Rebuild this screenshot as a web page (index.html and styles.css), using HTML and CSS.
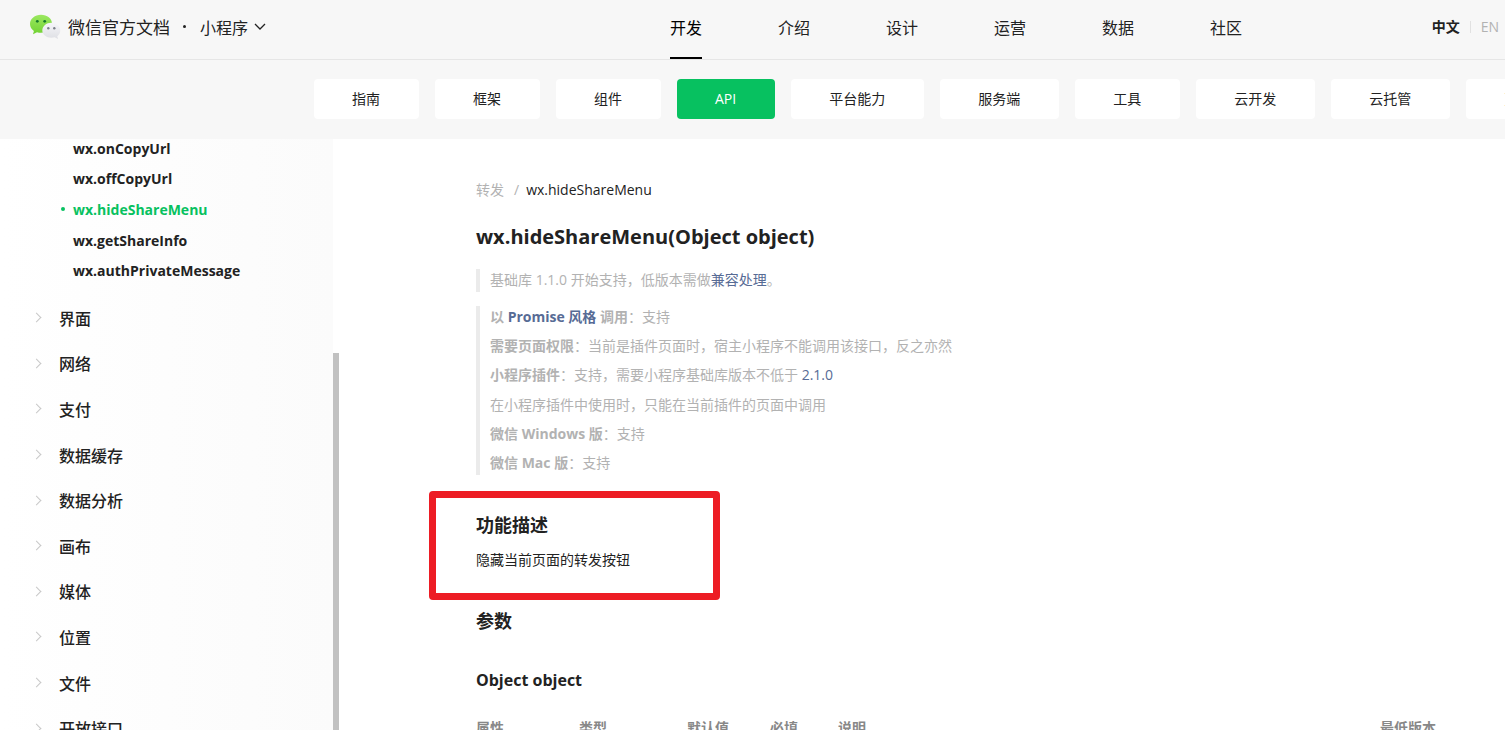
FILE: index.html
```html
<!DOCTYPE html>
<html lang="zh-CN">

<head>
    <meta charset="UTF-8">
    <meta name="viewport" content="width=device-width, initial-scale=1.0">
    <title>wx.hideShareMenu(Object object) | 微信开放文档</title>
    <link rel="stylesheet" href="styles.css">
</head>

<body>
    <header class="header">
        <div class="brand">
            <a href="#" class="brand-link">
                <svg class="logo" viewBox="0 0 32 26" width="32" height="26" aria-hidden="true">
                    <defs>
                        <linearGradient id="green" x1="0" y1="0" x2="0" y2="1">
                            <stop offset="0" stop-color="#9be860" />
                            <stop offset="1" stop-color="#71d233" />
                        </linearGradient>
                        <linearGradient id="grey" x1="0" y1="0" x2="0" y2="1">
                            <stop offset="0" stop-color="#f6f6f9" />
                            <stop offset="1" stop-color="#dedfe4" />
                        </linearGradient>
                    </defs>
                    <path fill="url(#green)" d="M12 0.8C5.900.8 1 4.900 1 10c0 2.800 1.500 5.300 3.900 7L4 20.300l4-2.100c1.300.4 2.600.6 4 .6 6.100 0 11-4.100 11-9.200S18.100.8 12 .8z" />
                    <circle cx="8.300" cy="7.300" r="1.400" fill="#187a2c" />
                    <circle cx="15.700" cy="7.300" r="1.400" fill="#187a2c" />
                    <path fill="url(#grey)" d="M22.300 8.800c5 0 9 3.400 9 7.700 0 2.300-1.200 4.300-3 5.700l.7 2.700-3.300-1.700c-1.100.3-2.200.5-3.400.5-5 0-9-3.200-9-7.200 0-4.300 4-7.700 9-7.700z" />
                    <circle cx="19.300" cy="14.300" r="1.200" fill="#7d8089" />
                    <circle cx="25.300" cy="14.300" r="1.200" fill="#7d8089" />
                </svg>
                <span>微信官方文档</span>
            </a>
            <span class="dot"></span>
            <button type="button" class="product">
                小程序
                <svg viewBox="0 0 12 8" width="12" height="8" aria-hidden="true">
                    <path d="M1 1l5 5 5-5" fill="none" stroke="#222" stroke-width="1.300" />
                </svg>
            </button>
        </div>
        <nav class="nav">
            <a href="#" class="active">开发</a>
            <a href="#">介绍</a>
            <a href="#">设计</a>
            <a href="#">运营</a>
            <a href="#">数据</a>
            <a href="#">社区</a>
        </nav>
        <div class="lang">
            <a href="#" class="current">中文</a>
            <a href="#">EN</a>
        </div>
    </header>

    <nav class="tabs">
        <a href="#">指南</a>
        <a href="#">框架</a>
        <a href="#">组件</a>
        <a href="#" class="active">API</a>
        <a href="#">平台能力</a>
        <a href="#">服务端</a>
        <a href="#">工具</a>
        <a href="#">云开发</a>
        <a href="#">云托管</a>
        <a href="#">更新日志</a>
    </nav>

    <div class="page">
        <aside class="sidebar">
            <div class="menu">
                <ul class="sub-menu">
                    <li><a href="#">wx.onCopyUrl</a></li>
                    <li><a href="#">wx.offCopyUrl</a></li>
                    <li><a href="#" class="active">wx.hideShareMenu</a></li>
                    <li><a href="#">wx.getShareInfo</a></li>
                    <li><a href="#">wx.authPrivateMessage</a></li>
                </ul>
                <ul class="main-menu">
                    <li><a href="#">界面</a></li>
                    <li><a href="#">网络</a></li>
                    <li><a href="#">支付</a></li>
                    <li><a href="#">数据缓存</a></li>
                    <li><a href="#">数据分析</a></li>
                    <li><a href="#">画布</a></li>
                    <li><a href="#">媒体</a></li>
                    <li><a href="#">位置</a></li>
                    <li><a href="#">文件</a></li>
                    <li><a href="#">开放接口</a></li>
                </ul>
            </div>
            <div class="scrollbar"></div>
        </aside>

        <main class="content">
            <div class="breadcrumb">
                <a href="#">转发</a>
                <span class="slash">/</span>
                <span class="here">wx.hideShareMenu</span>
            </div>

            <h1>wx.hideShareMenu(Object object)</h1>

            <blockquote>
                <p>基础库 1.1.0 开始支持，低版本需做<a href="#">兼容处理</a>。</p>
            </blockquote>
            <blockquote class="support">
                <p><strong>以 <a href="#">Promise 风格</a> 调用</strong>：支持</p>
                <p><strong>需要页面权限</strong>：当前是插件页面时，宿主小程序不能调用该接口，反之亦然</p>
                <p><strong>小程序插件</strong>：支持，需要小程序基础库版本不低于 <a href="#">2.1.0</a></p>
                <p>在小程序插件中使用时，只能在当前插件的页面中调用</p>
                <p><strong>微信 Windows 版</strong>：支持</p>
                <p><strong>微信 Mac 版</strong>：支持</p>
            </blockquote>

            <section class="marked">
                <h2>功能描述</h2>
                <p>隐藏当前页面的转发按钮</p>
            </section>

            <section>
                <h2>参数</h2>
                <h3>Object object</h3>
                <table>
                    <thead>
                        <tr>
                            <th class="col-name">属性</th>
                            <th class="col-type">类型</th>
                            <th class="col-default">默认值</th>
                            <th class="col-required">必填</th>
                            <th>说明</th>
                            <th class="col-version">最低版本</th>
                        </tr>
                    </thead>
                </table>
            </section>
        </main>
    </div>
</body>

</html>
```
FILE: styles.css
```css
*,
*::before {
    box-sizing: border-box;
}

body {
    margin: 0;
    height: 100vh;
    display: flex;
    flex-direction: column;
    overflow: hidden;
    font-family: "Open Sans", "Noto Sans CJK SC", sans-serif;
    font-size: 14px;
    color: #222;
    background-color: #fff;
}

a {
    color: inherit;
    text-decoration: none;
}

ul {
    list-style: none;
    margin: 0;
    padding: 0;
}

/* header */
.header {
    flex: none;
    display: flex;
    height: 60px;
    padding: 0 6px 0 29px;
    background-color: #f7f7f7;
    border-bottom: 1px solid #e6e6e6;
}

.brand {
    flex: 0 0 641px;
    display: flex;
    align-items: center;
    padding-bottom: 6px;
}

.brand-link {
    display: flex;
    align-items: center;
    gap: 7px;
    font-size: 17px;
}

.dot {
    width: 3px;
    height: 3px;
    margin: 0 14px 0 13px;
    border-radius: 50%;
    background-color: #222;
}

.product {
    display: flex;
    align-items: center;
    gap: 6px;
    padding: 0;
    border: none;
    background: none;
    font-family: inherit;
    font-size: 16px;
    color: #222;
    cursor: pointer;
}

.nav {
    display: flex;
    gap: 76px;
    font-size: 16px;
}

.nav a {
    line-height: 57px;
    height: 59px;
    border-bottom: 2px solid transparent;
}

.nav .active {
    color: #000;
    border-color: #000;
}

.lang {
    display: flex;
    align-items: center;
    margin-left: auto;
    padding-bottom: 6px;
    line-height: 12px;
    color: #b2b2b2;
}

.lang a + a {
    margin-left: 10px;
    padding-left: 10px;
    border-left: 1px solid #e1e1e1;
}

.lang .current {
    font-weight: bold;
    color: #222;
}

/* tabs */
.tabs {
    flex: none;
    display: flex;
    gap: 16px;
    padding: 19px 0 20px 314px;
    background-color: #f7f7f7;
    overflow: hidden;
}

.tabs a {
    flex: none;
    padding: 0 39px 0 38px;
    line-height: 40px;
    border-radius: 4px;
    background-color: #fff;
}

.tabs .active {
    color: #fff;
    background-color: #07c160;
}

.page {
    flex: 1;
    display: flex;
    min-height: 0;
}

/* sidebar */
.sidebar {
    flex: 0 0 339px;
    display: flex;
    overflow: hidden;
}

.menu {
    flex: 1;
    background: linear-gradient(to right, #fff, #fbfbfb);
}

.sub-menu,
.main-menu {
    display: grid;
    grid-auto-rows: 1fr;
    align-items: center;
}

.sub-menu {
    height: 153px;
    margin-top: -6px;
    padding-left: 61px;
    font-weight: bold;
}

.sub-menu a {
    display: flex;
    align-items: center;
}

.sub-menu a::before {
    content: "";
    width: 4px;
    height: 4px;
    margin-right: 8px;
    border-radius: 50%;
}

.sub-menu .active {
    color: #07c160;
}

.sub-menu .active::before {
    background-color: #07c160;
}

.main-menu {
    height: 456px;
    margin-top: 9px;
    padding-left: 33px;
    font-size: 16px;
    font-weight: 500;
}

.main-menu a {
    display: flex;
    align-items: center;
}

.main-menu a::before {
    content: "";
    width: 7px;
    height: 7px;
    margin-right: 19px;
    border: solid #c8c8c8;
    border-width: 1px 1px 0 0;
    transform: rotate(45deg);
}

.scrollbar {
    width: 6px;
    margin-top: 214px;
    background-color: #c1c1c1;
}

/* document */
.content {
    flex: 1;
    min-width: 0;
    padding: 40px 0 0 137px;
}

.breadcrumb {
    display: flex;
    line-height: 22px;
    color: #b2b2b2;
}

.slash {
    margin: 0 7px 0 10px;
}

.here {
    color: #222;
}

h1,
h2,
h3,
p,
blockquote {
    margin: 0;
}

h1 {
    margin: 20px 0 16px;
    font-size: 20px;
    line-height: 32px;
}

h2 {
    margin-top: 35px;
    font-size: 18px;
    line-height: 30px;
}

h3 {
    margin-top: 32px;
    font-size: 16px;
    line-height: 24px;
}

blockquote {
    margin-bottom: 14px;
    padding-left: 10px;
    border-left: 4px solid #ebebeb;
    line-height: 22px;
    color: #b2b2b2;
}

blockquote p {
    padding-bottom: 1px;
}

blockquote a {
    color: #576b95;
}

.support {
    display: flex;
    flex-direction: column;
    justify-content: space-between;
    min-height: 169px;
    margin-bottom: 0;
}

.marked {
    position: relative;
    line-height: 23px;
}

.marked p {
    margin-top: 8px;
}

.marked::before {
    content: "";
    position: absolute;
    top: -19px;
    left: -47px;
    width: 291px;
    height: 109px;
    border: 7px solid #ed1c24;
    border-radius: 4px;
}

table {
    width: 100%;
    margin-top: 24px;
    border-collapse: collapse;
    table-layout: fixed;
}

th {
    padding: 0;
    line-height: 24px;
    text-align: left;
    color: #888;
}

.col-name {
    width: 103px;
}

.col-type {
    width: 108px;
}

.col-default {
    width: 83px;
}

.col-required {
    width: 68px;
}

.col-version {
    width: 125px;
}
```
